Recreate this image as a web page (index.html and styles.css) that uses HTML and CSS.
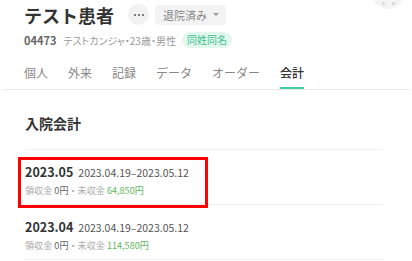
FILE: index.html
```html
<!DOCTYPE html>
<html lang="ja">
<head>
<meta charset="utf-8">
<link rel="stylesheet" href="styles.css">
</head>
<body>
<div class="page">
  <div class="float-btn"><span class="dot"></span><span class="dot"></span></div>
  <header class="header">
    <div class="title-row">
      <h1 class="title">テスト患者</h1>
      <button class="more-btn"><span class="dot"></span><span class="dot"></span><span class="dot"></span></button>
      <div class="status">退院済み<span class="caret"></span></div>
    </div>
    <div class="meta-row">
      <span class="pid">04473</span>
      <span class="meta">テストカンジャ・23歳・男性</span>
      <span class="badge">同姓同名</span>
    </div>
  </header>
  <nav class="tabs">
    <span class="tab">個人</span>
    <span class="tab">外来</span>
    <span class="tab">記録</span>
    <span class="tab">データ</span>
    <span class="tab">オーダー</span>
    <span class="tab active">会計</span>
  </nav>
  <section class="content">
    <h2 class="section-title">入院会計</h2>
    <div class="list">
      <div class="row highlighted">
        <div class="row-main"><span class="month">2023.05</span><span class="range">2023.04.19–2023.05.12</span></div>
        <div class="row-sub"><span class="lbl">領収金</span> <span class="val">0円</span><span class="lbl">・未収金</span> <span class="due">64,850円</span></div>
      </div>
      <div class="row">
        <div class="row-main"><span class="month">2023.04</span><span class="range">2023.04.19–2023.05.12</span></div>
        <div class="row-sub"><span class="lbl">領収金</span> <span class="val">0円</span><span class="lbl">・未収金</span> <span class="due">114,580円</span></div>
      </div>
    </div>
  </section>
</div>
</body>
</html>
```
FILE: styles.css
```css
* { box-sizing: border-box; }
html, body { margin: 0; padding: 0; background: #fff; }
body {
  font-family: "Noto Sans CJK JP", "Noto Sans", sans-serif;
  color: #333;
  width: 412px;
  height: 261px;
  overflow: hidden;
}
.page { position: relative; }
.float-btn {
  position: absolute;
  left: 372px;
  top: -23px;
  width: 32px;
  height: 32px;
  border-radius: 50%;
  background: #f4f4f4;
  display: flex;
  align-items: flex-end;
  justify-content: center;
  gap: 7px;
  padding-bottom: 4px;
}
.float-btn .dot { width: 3px; height: 3px; border-radius: 50%; background: #d6d6d6; }
.header { padding: 0 24px; }
.title-row {
  display: flex;
  align-items: center;
  height: 28px;
  padding-top: 1px;
}
.title {
  margin: 0;
  font-size: 18px;
  font-weight: 700;
  line-height: 26px;
  color: #333;
}
.more-btn {
  margin-left: 14px;
  width: 21px;
  height: 21px;
  border-radius: 50%;
  border: none;
  background: #f2f2f2;
  display: flex;
  align-items: center;
  justify-content: center;
  gap: 2px;
  padding: 0;
}
.more-btn .dot { width: 2px; height: 2px; border-radius: 50%; background: #555; }
.status {
  margin-left: 6px;
  height: 20px;
  padding: 0 7px 0 8px;
  background: #f3f3f3;
  border-radius: 4px;
  font-size: 11px;
  line-height: 20px;
  color: #888;
  display: flex;
  align-items: center;
  gap: 6px;
  font-feature-settings: "palt";
}
.caret {
  width: 0; height: 0;
  border-left: 3px solid transparent;
  border-right: 3px solid transparent;
  border-top: 3px solid #999;
}
.meta-row {
  display: flex;
  align-items: center;
  margin-top: 4px;
  height: 16px;
}
.pid { font-size: 11px; font-weight: 700; color: #666; }
.meta { font-size: 10px; color: #999; margin-left: 7px; font-feature-settings: "palt"; }
.badge {
  margin-left: 6px;
  font-size: 10px;
  color: #3cc08a;
  background: #e2f7ee;
  border-radius: 8px;
  padding: 0 5px;
  line-height: 16px;
  height: 16px;
}
.tabs {
  display: flex;
  gap: 20px;
  margin: 17px 2px 0;
  padding: 0 22px;
  border-bottom: 1px solid #ebebeb;
}
.tab {
  font-size: 12px;
  color: #888;
  line-height: 16px;
  padding-bottom: 8px;
}
.tab.active {
  color: #333;
  font-weight: 500;
  padding-bottom: 6px;
  border-bottom: 2px solid #3ccf97;
}
.content { padding: 0 29px 0 25px; }
.section-title {
  margin: 23px 0 0 0;
  font-size: 14px;
  font-weight: 700;
  line-height: 20px;
  color: #333;
}
.list { margin-top: 16px; border-top: 1px solid #f2f2f2; }
.row {
  border-bottom: 1px solid #f2f2f2;
  padding: 12px 0 0;
  height: 55px;
}
.row.highlighted { position: relative; }
.row.highlighted::after {
  content: "";
  position: absolute;
  left: -7px;
  top: 7px;
  width: 184px;
  height: 45px;
  border: 3px solid #f00;
}
.row-main { display: flex; align-items: baseline; gap: 5px; line-height: 20px; }
.month { font-size: 12.5px; font-weight: 700; color: #333; }
.range { font-size: 10.5px; color: #555; }
.row-sub { font-size: 9.1px; line-height: 14px; }
.lbl { color: #aaa; }
.val { color: #666; }
.due { color: #5cb85c; }
```
